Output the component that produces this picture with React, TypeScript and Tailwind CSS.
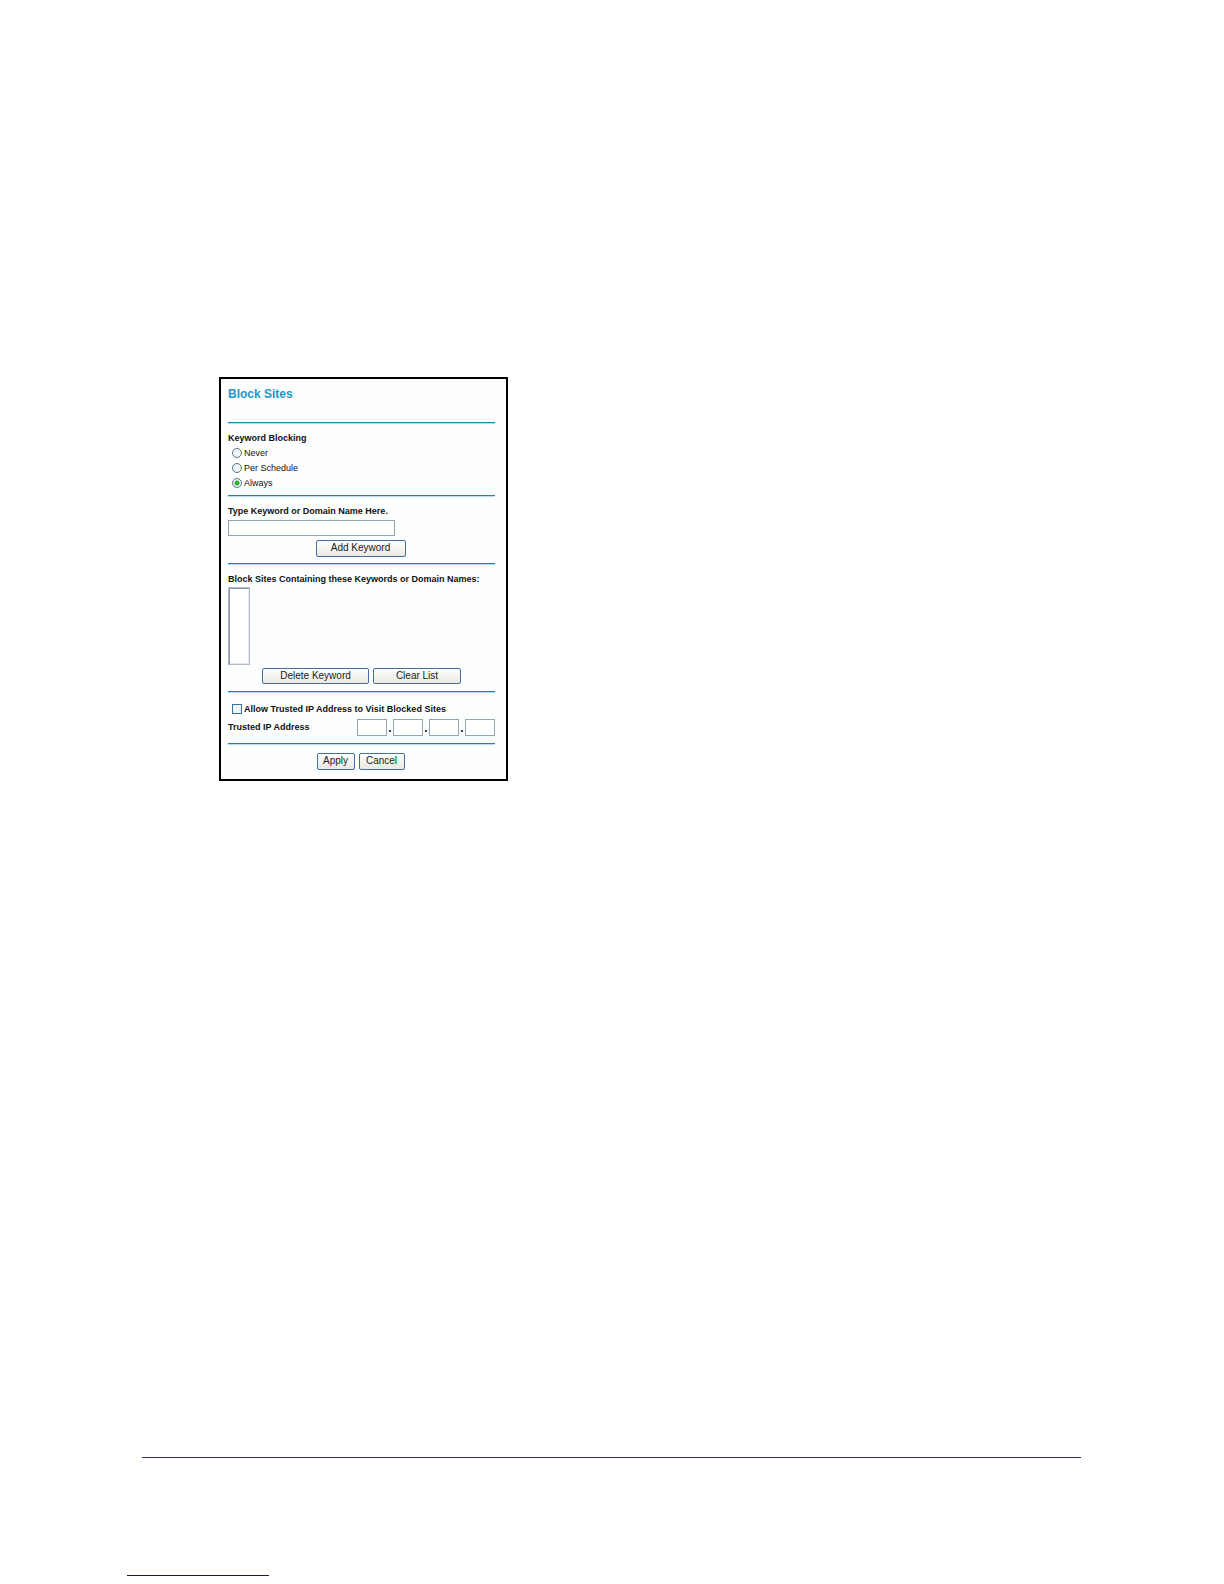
import { useState } from "react";
import type { ReactNode } from "react";

const modes = ["Never", "Per Schedule", "Always"];

function Rule() {
  return <hr className="h-0.5 border-0 border-b border-[#b4dcee] bg-[#1787bb]" />;
}

function PushButton({ className, children }: { className: string; children: ReactNode }) {
  return (
    <button
      type="button"
      className={`flex items-center justify-center rounded-[2px] border border-[#456f9c] bg-linear-to-b from-white to-[#eae8e0] pb-px text-[10px] leading-none text-[#222] ${className}`}
    >
      {children}
    </button>
  );
}

function IpFields() {
  return (
    <div className="flex items-end">
      {[1, 2, 3, 4].map((part) => (
        <div key={part} className="flex items-end">
          {part > 1 && <span className="w-1.5 text-center text-xs leading-4">.</span>}
          <input
            type="text"
            aria-label={`Trusted IP Address part ${part}`}
            className="h-[17px] w-[30px] border border-[#94a5ae] bg-white px-0.5 font-normal outline-none"
          />
        </div>
      ))}
    </div>
  );
}

export default function App() {
  const [mode, setMode] = useState("Always");

  return (
    <div className="flex min-h-screen flex-col bg-white font-['Liberation_Sans',Arial,sans-serif] text-[9px] leading-[15px] text-[#111]">
      <main className="pt-[377px] pl-[219px]">
        <form className="w-full max-w-[289px] border-2 border-black bg-[#fdfefe] pt-[7px] pr-[11px] pb-[9px] pl-[7px]">
          <h1 className="mb-5 text-xs leading-4 font-bold text-[#1b97c8]">Block Sites</h1>
          <Rule />

          <fieldset className="mt-[7px] mb-1">
            <legend className="font-bold">Keyword Blocking</legend>
            {modes.map((name) => (
              <label key={name} className="flex items-start gap-0.5 pl-1">
                <input
                  type="radio"
                  name="mode"
                  checked={mode === name}
                  onChange={() => setMode(name)}
                  className="mt-0.5 size-2.5 appearance-none rounded-full border border-[#58758c] bg-[#f1f5f5] checked:bg-[radial-gradient(circle,#2fae2f_0_2px,#f1f5f5_3px)]"
                />
                {name}
              </label>
            ))}
          </fieldset>
          <Rule />

          <label htmlFor="keyword" className="mt-[7px] block font-bold">
            Type Keyword or Domain Name Here.
          </label>
          <input
            id="keyword"
            type="text"
            className="mt-px block h-4 w-[167px] border border-[#94a5ae] bg-white px-0.5 outline-none"
          />
          <div className="mt-1 mb-1.5 flex justify-center pr-0.5">
            <PushButton className="h-[17px] w-[90px]">Add Keyword</PushButton>
          </div>
          <Rule />

          <label htmlFor="blocked" className="mt-[7px] block font-bold whitespace-nowrap">
            Block Sites Containing these Keywords or Domain Names:
          </label>
          <select
            id="blocked"
            size={5}
            className="block h-[78px] w-[22px] appearance-none overflow-hidden border border-[#b3b8c6] bg-white shadow-[inset_1px_1px_0_#8d96a8,inset_-1px_-1px_0_#e6e8ee] outline-none"
          />
          <div className="mt-[3px] mb-[7px] flex justify-center gap-1">
            <PushButton className="h-4 w-[107px]">Delete Keyword</PushButton>
            <PushButton className="h-4 w-[88px]">Clear List</PushButton>
          </div>
          <Rule />

          <label className="mt-[9px] flex items-start gap-0.5 pl-1 font-bold whitespace-nowrap">
            <input
              type="checkbox"
              className="mt-0.5 size-2.5 appearance-none border border-[#3f6f9a] bg-[#f3f6f6] checked:bg-[#2fae2f]"
            />
            Allow Trusted IP Address to Visit Blocked Sites
          </label>
          <div className="mt-0.5 mb-[7px] flex items-center justify-between font-bold">
            <span>Trusted IP Address</span>
            <IpFields />
          </div>
          <Rule />

          <div className="mt-2 flex justify-center gap-1 pr-0.5">
            <PushButton className="h-[17px] w-[38px]">Apply</PushButton>
            <PushButton className="h-[17px] w-[46px]">Cancel</PushButton>
          </div>
        </form>
      </main>

      <footer className="mt-auto pb-2">
        <hr className="mr-[143px] ml-[142px] h-px border-0 bg-[#3a2c6c]" />
        <hr className="mt-[117px] ml-[127px] h-px w-[142px] border-0 bg-[#15156f]" />
      </footer>
    </div>
  );
}
